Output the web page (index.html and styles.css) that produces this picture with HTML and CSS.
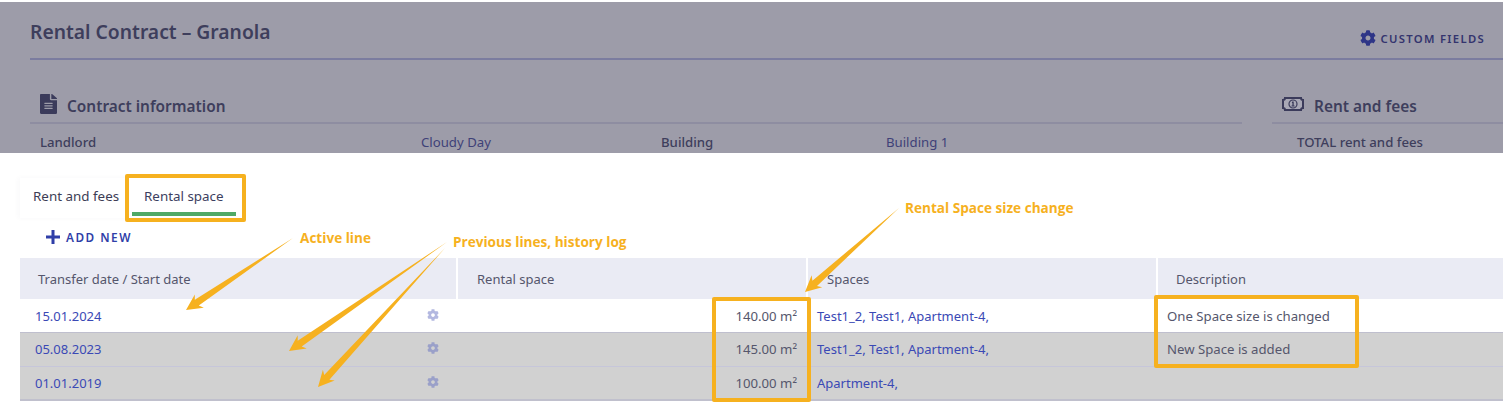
FILE: index.html
```html
<!DOCTYPE html>
<html lang="en">
<head>
<meta charset="utf-8">
<title>Rental Contract – Granola</title>
<link rel="stylesheet" href="styles.css">
</head>
<body>
<svg class="defs" width="0" height="0" aria-hidden="true">
  <symbol id="cog" viewBox="0 0 512 512"><path d="M487.4 315.7l-42.6-24.6c4.3-23.2 4.3-47 0-70.2l42.6-24.6c4.9-2.8 7.1-8.6 5.5-14-11.1-35.6-30-67.8-54.7-94.6-3.8-4.1-10-5.1-14.8-2.3L380.8 110c-17.9-15.4-38.5-27.3-60.8-35.1V25.8c0-5.6-3.9-10.5-9.4-11.7-36.7-8.2-74.3-7.8-109.2 0-5.5 1.2-9.4 6.1-9.4 11.7V75c-22.2 7.9-42.8 19.8-60.8 35.1L88.7 85.5c-4.9-2.8-11-1.9-14.8 2.3-24.7 26.7-43.6 58.9-54.7 94.6-1.7 5.4.6 11.2 5.5 14L67.3 221c-4.3 23.2-4.3 47 0 70.2l-42.6 24.6c-4.9 2.8-7.1 8.6-5.5 14 11.1 35.6 30 67.8 54.7 94.6 3.8 4.1 10 5.1 14.8 2.3l42.6-24.6c17.9 15.4 38.5 27.3 60.8 35.1v49.2c0 5.6 3.9 10.5 9.4 11.7 36.7 8.2 74.3 7.8 109.2 0 5.5-1.2 9.4-6.1 9.4-11.7v-49.2c22.2-7.9 42.8-19.8 60.8-35.1l42.6 24.6c4.9 2.8 11 1.9 14.8-2.3 24.7-26.7 43.6-58.9 54.7-94.6 1.5-5.5-.7-11.3-5.6-14.1zM256 336c-44.1 0-80-35.9-80-80s35.9-80 80-80 80 35.9 80 80-35.9 80-80 80z"/></symbol>
</svg>

<section class="dimmed">
  <header class="title-row">
    <h1 class="title">Rental Contract – Granola</h1>
    <a class="custom-fields"><svg class="cf-icon"><use href="#cog"/></svg>CUSTOM FIELDS</a>
  </header>
  <div class="panels">
    <div class="panel panel-main">
      <h2 class="panel-head">
        <svg class="file-icon" viewBox="0 0 384 512" preserveAspectRatio="none"><path d="M224 136V0H24C10.7 0 0 10.7 0 24v464c0 13.3 10.7 24 24 24h336c13.3 0 24-10.7 24-24V160H248c-13.2 0-24-10.8-24-24zm64 236c0 6.6-5.4 12-12 12H108c-6.6 0-12-5.4-12-12v-8c0-6.6 5.4-12 12-12h168c6.6 0 12 5.4 12 12v8zm0-64c0 6.6-5.4 12-12 12H108c-6.6 0-12-5.4-12-12v-8c0-6.6 5.4-12 12-12h168c6.6 0 12 5.4 12 12v8zm0-72v8c0 6.6-5.4 12-12 12H108c-6.6 0-12-5.4-12-12v-8c0-6.6 5.4-12 12-12h168c6.6 0 12 5.4 12 12zm96-114.1v6.1H256V0h6.1c6.4 0 12.5 2.5 17 7l97.9 98c4.5 4.5 7 10.6 7 16.9z"/></svg>
        Contract information
      </h2>
      <div class="info-grid">
        <span class="info-label">Landlord</span>
        <a class="info-link">Cloudy Day</a>
        <span class="info-label">Building</span>
        <a class="info-link">Building 1</a>
      </div>
    </div>
    <div class="panel panel-side">
      <h2 class="panel-head panel-head-side">
        <svg class="money-icon" viewBox="0 0 22 14"><path class="money-frame" d="M3 1H19A2 2 0 0 0 21 3V11A2 2 0 0 0 19 13H3A2 2 0 0 0 1 11V3A2 2 0 0 0 3 1z"/><circle class="money-coin" cx="11" cy="7" r="4"/><path d="M10.200 4.600h1.500v4h.9v1H9.500v-1h.9V5.900h-.6z"/></svg>
        Rent and fees
      </h2>
      <div class="info-side"><span class="info-label">TOTAL rent and fees</span></div>
    </div>
  </div>
</section>

<section class="content">
  <nav class="tabs">
    <a class="tab">Rent and fees</a>
    <a class="tab tab-active">Rental space</a>
  </nav>
  <a class="add-new">
    <svg class="plus-icon" viewBox="0 0 14 14"><path d="M5.500 0h3v5.500H14v3H8.500V14h-3V8.500H0v-3h5.500z"/></svg>
    ADD NEW
  </a>
  <div class="table">
    <div class="thead">
      <div class="th">Transfer date / Start date</div>
      <div class="th th-space">Rental space</div>
      <div class="th th-spaces">Spaces</div>
      <div class="th th-last">Description</div>
    </div>
    <div class="tr tr-active">
      <a class="td td-date">15.01.2024<svg class="row-cog"><use href="#cog"/></svg></a>
      <div class="td td-size">140.00 m²</div>
      <a class="td td-link">Test1_2, Test1, Apartment-4,</a>
      <div class="td">One Space size is changed</div>
    </div>
    <div class="tr tr-old tr-mid">
      <a class="td td-date">05.08.2023<svg class="row-cog"><use href="#cog"/></svg></a>
      <div class="td td-size">145.00 m²</div>
      <a class="td td-link">Test1_2, Test1, Apartment-4,</a>
      <div class="td">New Space is added</div>
    </div>
    <div class="tr tr-old tr-end">
      <a class="td td-date">01.01.2019<svg class="row-cog"><use href="#cog"/></svg></a>
      <div class="td td-size">100.00 m²</div>
      <a class="td td-link">Apartment-4,</a>
      <div class="td"></div>
    </div>
  </div>
</section>

<div class="mark mark-tab"></div>
<div class="mark mark-size"></div>
<div class="mark mark-desc"></div>
<span class="note note-active">Active line</span>
<span class="note note-history">Previous lines, history log</span>
<span class="note note-size">Rental Space size change</span>
<svg class="arrows" width="1503" height="415" viewBox="0 0 1503 415">
  <polygon points="293,238 198.800,305.600 203.800,307.700 186,310 194.800,294.500 194.800,299.800"/>
  <polygon points="447,242 301.700,346.500 306.700,348.500 289,351 297.700,335.300 297.700,340.700"/>
  <polygon points="445,248 329.400,379.800 334.700,380.600 318,387 322.900,369.800 324.200,375"/>
  <polygon points="899,208 817,285.900 822.200,287.300 805,292 811.600,275.300 812.400,280.700"/>
</svg>
</body>
</html>
```

FILE: styles.css
```css
* { box-sizing: border-box; }

html, body {
  margin: 0;
  height: 415px;
  overflow: hidden;
  background: #fff;
}

body {
  position: relative;
  font-family: "Noto Sans", "Open Sans", sans-serif;
  font-size: 13.2px;
  color: #45455f;
}

.defs { position: absolute; }

/* Dimmed upper part */
.dimmed {
  margin-top: 2px;
  height: 151px;
  background: #9d9ca9;
  padding-left: 30px;
  overflow: hidden;
  color: #3e3e5c;
}

.title-row {
  display: flex;
  justify-content: space-between;
  height: 58px;
  border-bottom: 2px solid #7b7c9f;
}

.title {
  margin: 17px 0 0;
  font-size: 19.3px;
  line-height: 26px;
  font-weight: 600;
}

.custom-fields {
  display: flex;
  align-items: center;
  gap: 5px;
  margin: 27px 18px 0 0;
  height: 18px;
  font-size: 11.3px;
  font-weight: 600;
  letter-spacing: 1.3px;
  color: #34346e;
}

.cf-icon {
  width: 16px;
  height: 16px;
  fill: #2e3587;
}

.panels {
  display: flex;
  gap: 30px;
  margin-top: 27px;
}

.panel-main { width: 1212px; }
.panel-side { flex: 1; }

.panel-head {
  display: flex;
  align-items: center;
  height: 37px;
  margin: 0;
  padding: 4px 0 0 10px;
  gap: 10px;
  font-size: 15.4px;
  font-weight: 600;
  border-bottom: 2px solid #8e8da1;
}

.file-icon {
  width: 17px;
  height: 20px;
  fill: #3b3b5b;
  margin-top: -5px;
}

.money-icon {
  width: 22px;
  height: 14px;
  fill: #3b3b5b;
  margin-top: -5px;
}

.money-frame {
  fill: #a9a8b6;
  stroke: #3b3b5b;
  stroke-width: 2;
}

.money-coin {
  fill: #a9a8b6;
  stroke: #3b3b5b;
  stroke-width: 1.2;
}

.info-grid {
  display: grid;
  grid-template-columns: 381px 240px 225px 1fr;
  padding: 9px 0 0 10px;
  line-height: 18px;
}

.info-side {
  padding: 9px 0 0 25px;
  line-height: 18px;
}

.info-label { font-weight: 500; }
.info-link { color: #3f4178; }

/* Lower part */
.content {
  padding: 25px 0 0 20px;
  height: 262px;
}

.tabs {
  display: flex;
  align-items: flex-start;
  height: 40px;
  width: 226px;
  background: #fff;
  box-shadow: -2px 0 5px rgba(60, 60, 110, 0.03);
}

.tab {
  width: 112px;
  flex: none;
  padding: 9px 0 0 13px;
  height: 38px;
  font-size: 13.400px;
  line-height: 18px;
  color: #3d3d55;
}

.tab-active {
  width: 104px;
  padding-left: 12px;
  border-bottom: 4px solid #4fa966;
  color: #3c4060;
}

.add-new {
  display: flex;
  align-items: center;
  gap: 6px;
  height: 20px;
  margin: 9px 0 11px 26px;
  font-size: 11.800px;
  font-weight: 600;
  letter-spacing: 1.500px;
  color: #2f3ea8;
}

.plus-icon {
  width: 14px;
  height: 14px;
  fill: #2f3ea8;
}

.thead, .tr {
  display: grid;
  grid-template-columns: 438px 350px 350px 1fr;
}

.thead {
  height: 41px;
  background: #eaebf4;
}

.th {
  display: flex;
  align-items: center;
  padding: 1px 0 0 18px;
  border-right: 2px solid #fff;
  font-size: 13px;
  color: #55566c;
}

.th-space, .th-spaces { padding-left: 19px; }
.th-last { border-right: 0; }

.tr { height: 34px; }

.tr-active {
  padding-top: 1px;
  border-bottom: 1px solid #bfbfce;
}

.tr-mid {
  padding-bottom: 1px;
  border-bottom: 1px solid #c6c6da;
}

.tr-end { border-bottom: 2px solid #c0c0cd; }

.tr-old { background: #d1d1d1; }

.td {
  display: flex;
  align-items: center;
  padding: 0 0 0 9px;
  color: #55566c;
}

.td-date {
  justify-content: space-between;
  padding: 0 19px 0 15px;
  font-size: 13px;
  color: #3a49b5;
}

.td-size {
  justify-content: flex-end;
  padding-right: 11px;
}

.td-link {
  font-size: 13px;
  color: #3a49b5;
}

.row-cog {
  width: 12px;
  height: 12px;
  margin-top: -3px;
  fill: #b3b8e0;
}

.tr-old .row-cog { fill: #9aa0c9; }

/* Annotations laid over the screenshot */
.mark {
  position: absolute;
  border: 4px solid #f6b11f;
  border-radius: 2px;
}

.mark-tab { left: 125px; top: 174px; width: 121px; height: 48px; }
.mark-size { left: 712px; top: 297px; width: 99px; height: 105px; }
.mark-desc { left: 1154px; top: 295px; width: 205px; height: 73px; }

.note {
  position: absolute;
  font-family: "Open Sans", "Noto Sans", sans-serif;
  font-size: 13.600px;
  font-weight: 700;
  line-height: 18px;
  color: #f6b11f;
  white-space: nowrap;
}

.note-active { left: 300px; top: 229px; }
.note-history { left: 453px; top: 233px; }
.note-size { left: 905px; top: 199px; }

.arrows {
  position: absolute;
  left: 0;
  top: 0;
  fill: #f6b11f;
  pointer-events: none;
}
```
